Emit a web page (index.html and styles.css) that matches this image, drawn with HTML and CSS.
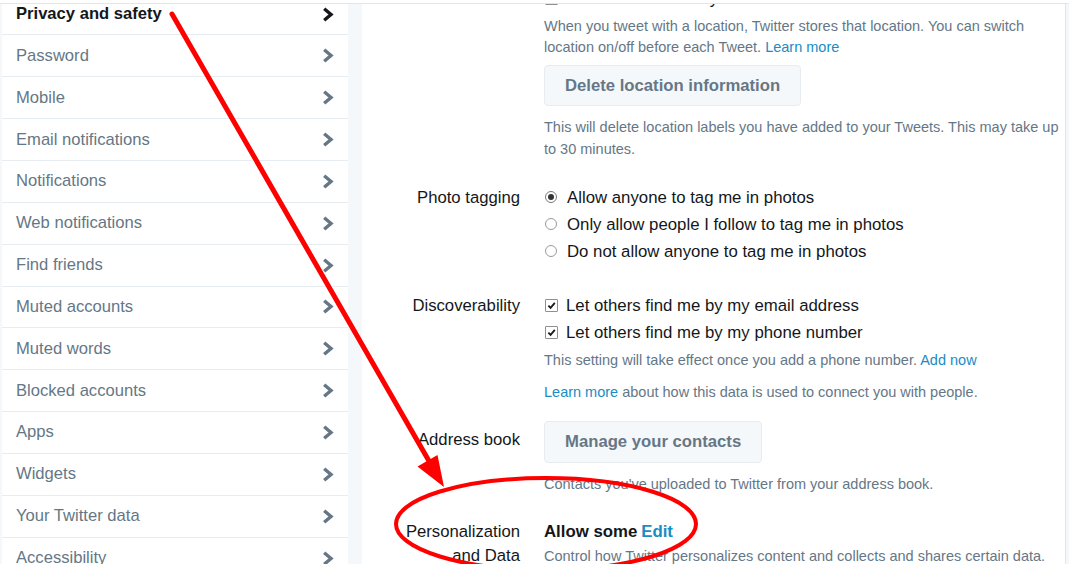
FILE: index.html
```html
<!DOCTYPE html>
<html lang="en">
<head>
<meta charset="utf-8">
<title>Privacy and safety</title>
<link rel="stylesheet" href="styles.css">
</head>
<body>
<div class="topbar"></div>
<div class="layout">
  <nav class="sidebar">
    <ul class="menu">
      <li class="item active"><span>Privacy and safety</span><svg class="chev" viewBox="0 0 12 15"><polyline points="2.2,1.8 9,7.5 2.2,13.2"/></svg></li>
      <li class="item"><span>Password</span><svg class="chev" viewBox="0 0 12 15"><polyline points="2.2,1.8 9,7.5 2.2,13.2"/></svg></li>
      <li class="item"><span>Mobile</span><svg class="chev" viewBox="0 0 12 15"><polyline points="2.2,1.8 9,7.5 2.2,13.2"/></svg></li>
      <li class="item"><span>Email notifications</span><svg class="chev" viewBox="0 0 12 15"><polyline points="2.2,1.8 9,7.5 2.2,13.2"/></svg></li>
      <li class="item"><span>Notifications</span><svg class="chev" viewBox="0 0 12 15"><polyline points="2.2,1.8 9,7.5 2.2,13.2"/></svg></li>
      <li class="item"><span>Web notifications</span><svg class="chev" viewBox="0 0 12 15"><polyline points="2.2,1.8 9,7.5 2.2,13.2"/></svg></li>
      <li class="item"><span>Find friends</span><svg class="chev" viewBox="0 0 12 15"><polyline points="2.2,1.8 9,7.5 2.2,13.2"/></svg></li>
      <li class="item"><span>Muted accounts</span><svg class="chev" viewBox="0 0 12 15"><polyline points="2.2,1.8 9,7.5 2.2,13.2"/></svg></li>
      <li class="item"><span>Muted words</span><svg class="chev" viewBox="0 0 12 15"><polyline points="2.2,1.8 9,7.5 2.2,13.2"/></svg></li>
      <li class="item"><span>Blocked accounts</span><svg class="chev" viewBox="0 0 12 15"><polyline points="2.2,1.8 9,7.5 2.2,13.2"/></svg></li>
      <li class="item"><span>Apps</span><svg class="chev" viewBox="0 0 12 15"><polyline points="2.2,1.8 9,7.5 2.2,13.2"/></svg></li>
      <li class="item"><span>Widgets</span><svg class="chev" viewBox="0 0 12 15"><polyline points="2.2,1.8 9,7.5 2.2,13.2"/></svg></li>
      <li class="item"><span>Your Twitter data</span><svg class="chev" viewBox="0 0 12 15"><polyline points="2.2,1.8 9,7.5 2.2,13.2"/></svg></li>
      <li class="item"><span>Accessibility</span><svg class="chev" viewBox="0 0 12 15"><polyline points="2.2,1.8 9,7.5 2.2,13.2"/></svg></li>
    </ul>
  </nav>
  <main class="main">
    <div class="content">
      <section class="setting s-loc">
        <div class="label">Tweet location</div>
        <div class="controls">
          <div class="opt"><span class="box"></span>Add a location to my Tweets</div>
          <p class="help h-first">When you tweet with a location, Twitter stores that location. You can switch location on/off before each Tweet. <a class="link" href="#">Learn more</a></p>
          <button class="btn btn-del">Delete location information</button>
          <p class="help h-after-btn">This will delete location labels you have added to your Tweets. This may take up to 30 minutes.</p>
        </div>
      </section>

      <section class="setting s-photo">
        <div class="label">Photo tagging</div>
        <div class="controls">
          <div class="opt"><span class="radio checked"></span>Allow anyone to tag me in photos</div>
          <div class="opt"><span class="radio"></span>Only allow people I follow to tag me in photos</div>
          <div class="opt"><span class="radio"></span>Do not allow anyone to tag me in photos</div>
        </div>
      </section>

      <section class="setting s-disc">
        <div class="label">Discoverability</div>
        <div class="controls">
          <div class="opt"><span class="box checked"><svg viewBox="0 0 12 12"><polyline points="2.6,6.2 5,8.6 9.6,3.2"/></svg></span>Let others find me by my email address</div>
          <div class="opt"><span class="box checked"><svg viewBox="0 0 12 12"><polyline points="2.6,6.2 5,8.6 9.6,3.2"/></svg></span>Let others find me by my phone number</div>
          <p class="help h-first">This setting will take effect once you add a phone number. <a class="link" href="#">Add now</a></p>
          <p class="help h-learn"><a class="link" href="#">Learn more</a> about how this data is used to connect you with people.</p>
        </div>
      </section>

      <section class="setting s-addr">
        <div class="label label-btn">Address book</div>
        <div class="controls">
          <button class="btn btn-contacts">Manage your contacts</button>
          <p class="help h-after-btn">Contacts you've uploaded to Twitter from your address book.</p>
        </div>
      </section>

      <section class="setting s-pers">
        <div class="label label-two">Personalization<br>and Data</div>
        <div class="controls">
          <div class="opt strong">Allow some <a class="link edit" href="#">Edit</a></div>
          <p class="help h-tight">Control how Twitter personalizes content and collects and shares certain data.</p>
        </div>
      </section>
    </div>
  </main>
</div>
<svg class="annot" viewBox="0 0 1069 564" width="1069" height="564">
  <line x1="172" y1="14" x2="429" y2="461" class="red-stroke arrow-line"/>
  <polygon points="417.5,466.5 437.5,455 444,487" class="red-fill"/>
  <ellipse cx="546" cy="524" rx="150" ry="46" class="red-stroke ring"/>
</svg>
</body>
</html>
```

FILE: styles.css
```css
* { box-sizing: border-box; }

html, body {
  margin: 0;
  padding: 0;
}

body {
  width: 1069px;
  height: 564px;
  overflow: hidden;
  background: #f5f8fa;
  font-family: "Liberation Sans", Arial, sans-serif;
  color: #14171a;
  position: relative;
}

.topbar {
  height: 4px;
  background: #ffffff;
  border-bottom: 1px solid #e1e6ea;
}

.layout {
  display: flex;
  height: 560px;
  overflow: hidden;
  padding-left: 2px;
  padding-right: 3px;
  gap: 14px;
}

/* Sidebar */
.sidebar {
  width: 346px;
  flex: none;
  background: #ffffff;
  overflow: hidden;
}

.menu {
  list-style: none;
  margin: -10.4px 0 0 0;
  padding: 0;
}

.item {
  height: 41.85px;
  border-bottom: 1px solid #e6ecf0;
  display: flex;
  align-items: center;
  justify-content: space-between;
  padding: 0 14px 0 14px;
  font-size: 16.6px;
  color: #657786;
}

.item.active {
  color: #14171a;
  font-weight: bold;
}

.chev {
  width: 12px;
  height: 15px;
}

.chev polyline {
  fill: none;
  stroke: #657786;
  stroke-width: 3.4;
  stroke-linecap: butt;
  stroke-linejoin: miter;
}

.item.active .chev polyline {
  stroke: #14171a;
}

/* Main */
.main {
  flex: 1;
  background: #ffffff;
  border-right: 1px solid #e1e6ea;
  overflow: hidden;
}

.content {
  margin-top: -19.5px;
}

.setting {
  display: grid;
  grid-template-columns: 158px 1fr;
  column-gap: 24px;
}

.s-photo { margin-top: 23.5px; }
.s-disc { margin-top: 27px; }
.s-addr { margin-top: 18px; }
.s-pers { margin-top: 22px; }

.label {
  text-align: right;
  font-size: 16.7px;
  line-height: 27px;
  color: #14171a;
}

.label-btn {
  padding-top: 4.5px;
}

.label-two {
  line-height: 24px;
  padding-top: 2.5px;
}

.controls {
  display: flex;
  flex-direction: column;
  align-items: flex-start;
}

.opt {
  display: flex;
  align-items: center;
  font-size: 16.8px;
  line-height: 27px;
  height: 27px;
  color: #14171a;
  white-space: nowrap;
}

.opt.strong {
  font-weight: bold;
}

.radio {
  width: 12px;
  height: 12px;
  border: 1px solid #9a9a9a;
  border-radius: 50%;
  margin: 0 10px 0 1px;
  position: relative;
  background: #ffffff;
  flex: none;
}

.radio.checked {
  border-color: #7a7a7a;
}

.radio.checked::after {
  content: "";
  position: absolute;
  left: 2px;
  top: 2px;
  width: 6px;
  height: 6px;
  border-radius: 50%;
  background: #333333;
}

.box {
  width: 13px;
  height: 13px;
  border: 1px solid #8f8f8f;
  border-radius: 1px;
  margin: 0 8px 0 1px;
  background: #ffffff;
  flex: none;
  display: flex;
}

.box svg {
  width: 11px;
  height: 11px;
}

.box polyline {
  fill: none;
  stroke: #1a1a1a;
  stroke-width: 2;
}

.help {
  margin: 0;
  font-size: 14.5px;
  line-height: 21.5px;
  color: #657786;
}

.h-first { margin-top: 4px; }
.h-after-btn { margin-top: 11px; }
.h-learn { margin-top: 10.5px; }
.h-tight { margin-top: 1.5px; }

.link {
  color: #1b8cc4;
  text-decoration: none;
}

.edit {
  margin-left: 4px;
}

.btn {
  font-family: "Liberation Sans", Arial, sans-serif;
  font-weight: bold;
  font-size: 16.7px;
  color: #657786;
  background: #f5f8fa;
  border: 1px solid #e6ecf0;
  border-radius: 4px;
  padding: 0 20px;
  cursor: pointer;
}

.btn-del {
  height: 41px;
  margin-top: 6.5px;
}

.btn-contacts {
  height: 42px;
}

/* Annotation overlay */
.annot {
  position: absolute;
  left: 0;
  top: 0;
  pointer-events: none;
}

.red-stroke {
  fill: none;
  stroke: #ff0000;
}

.arrow-line {
  stroke-width: 5;
  stroke-linecap: round;
}

.ring {
  stroke-width: 4;
}

.red-fill {
  fill: #ff0000;
}
```
